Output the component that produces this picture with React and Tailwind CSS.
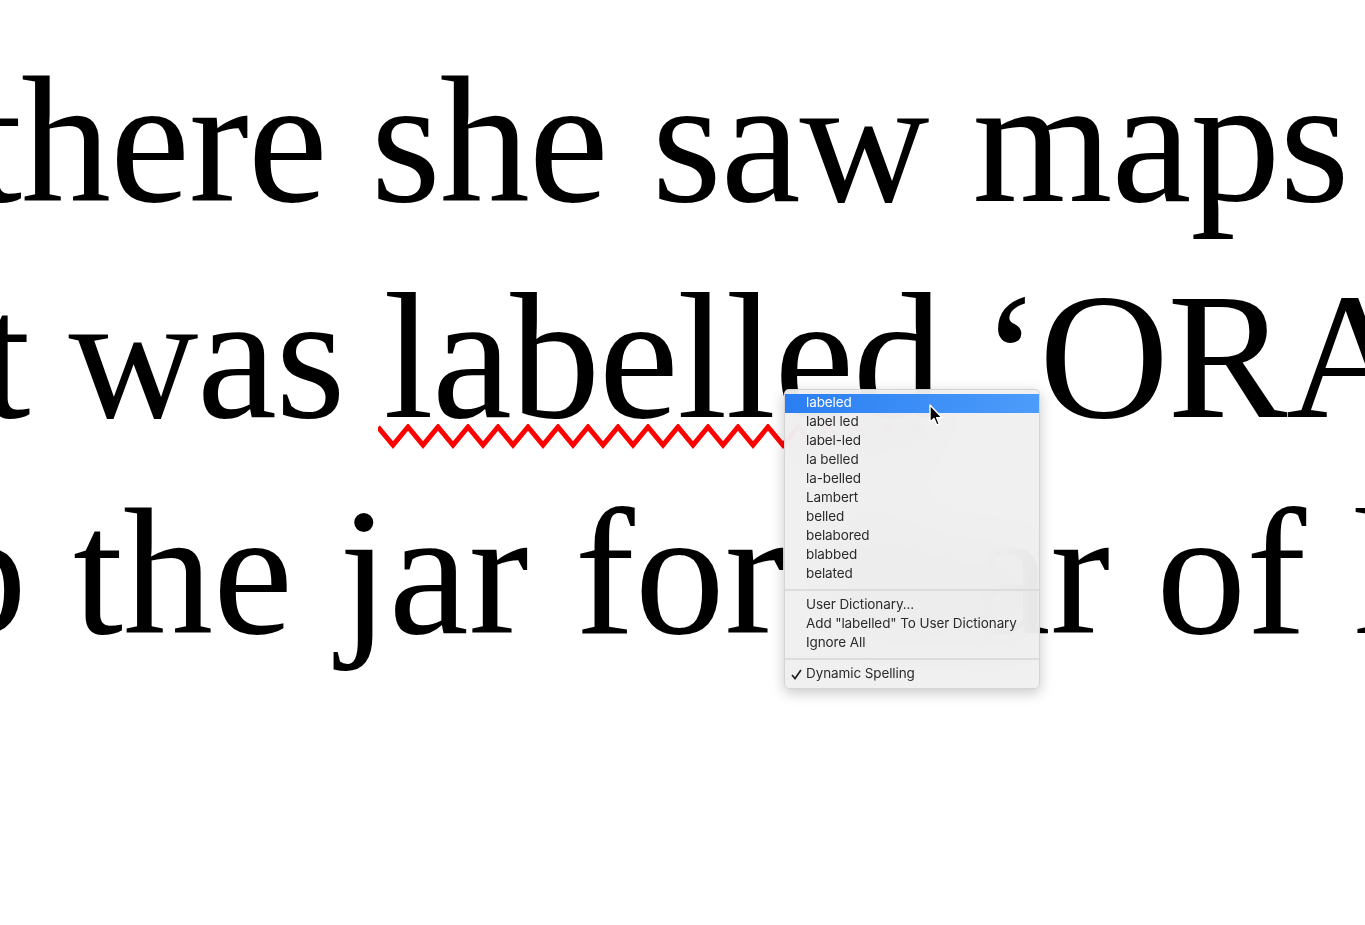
import React from 'react';

const SUGGESTIONS = [
  'labeled',
  'label led',
  'label-led',
  'la belled',
  'la-belled',
  'Lambert',
  'belled',
  'belabored',
  'blabbed',
  'belated',
];

const serif = { fontFamily: '"Liberation Serif", "Times New Roman", serif' };

function Squiggle() {
  const pts = [];
  for (let i = 0; i <= 38; i++) {
    pts.push(`${i * 15},${i % 2 === 0 ? 3 : 21}`);
  }
  return (
    <svg className="absolute left-[378px] top-[424px]" width="560" height="26" viewBox="0 0 560 26">
      <polyline points={pts.join(' ')} fill="none" stroke="#ff0000" strokeWidth="5" strokeLinejoin="miter" />
    </svg>
  );
}

function Row({ children, active, check }) {
  return (
    <div
      className={`relative flex h-[19px] items-center pl-[21px] text-[13.5px] leading-none tracking-[-0.1px] ${
        active ? 'bg-gradient-to-r from-[#2a7ef2] to-[#4c9cfa] text-white' : 'text-[#2b2b2b]'
      }`}
    >
      {check && (
        <svg className="absolute left-[6px] top-[4px]" width="11" height="11" viewBox="0 0 11 11">
          <path d="M1 6 L4 9.5 L10 1" fill="none" stroke="#222" strokeWidth="1.7" />
        </svg>
      )}
      <span className="-mt-[2px]">{children}</span>
    </div>
  );
}

function Sep() {
  return (
    <div className="flex h-[12px] items-center">
      <div className="h-[2px] w-full bg-[#dcdcdc]" />
    </div>
  );
}

function Cursor() {
  return (
    <svg className="absolute left-[928px] top-[404px]" width="16" height="24" viewBox="0 0 16 24">
      <path d="M2 1 L2 18 L6 14.5 L8.8 21 L11.3 20 L8.6 13.6 L13.8 13.6 Z" fill="#000" stroke="#fff" strokeWidth="1.4" strokeLinejoin="round" />
    </svg>
  );
}

export default function App() {
  return (
    <div className="relative h-[925px] w-[1365px] overflow-hidden bg-white">
      <div className="pt-[33px] text-[180px] leading-[216px] text-black whitespace-nowrap" style={serif}>
        <div className="ml-[-28px] tracking-[-1px]">there she saw maps and pictures</div>
        <div className="ml-[-68px] tracking-[-1.5px] [word-spacing:-4px]">it was labelled ‘ORANGE MARMALADE’</div>
        <div className="ml-[-303px] [word-spacing:1px]">drop the jar for fear of killing</div>
      </div>

      <Squiggle />

      <div
        className="absolute left-[784px] top-[389px] w-[256px] rounded-[5px] border border-[#c8c8c8]/70 bg-[#efefef]/95 py-[4px] shadow-[0_4px_14px_rgba(0,0,0,0.22)] backdrop-blur-2xl"
        style={{ fontFamily: 'Inter, "Liberation Sans", Arial, sans-serif' }}
      >
        {SUGGESTIONS.map((s, i) => (
          <Row key={s} active={i === 0}>
            {s}
          </Row>
        ))}
        <Sep />
        <Row>User Dictionary...</Row>
        <Row>Add "labelled" To User Dictionary</Row>
        <Row>Ignore All</Row>
        <Sep />
        <Row check>Dynamic Spelling</Row>
      </div>

      <Cursor />
    </div>
  );
}
